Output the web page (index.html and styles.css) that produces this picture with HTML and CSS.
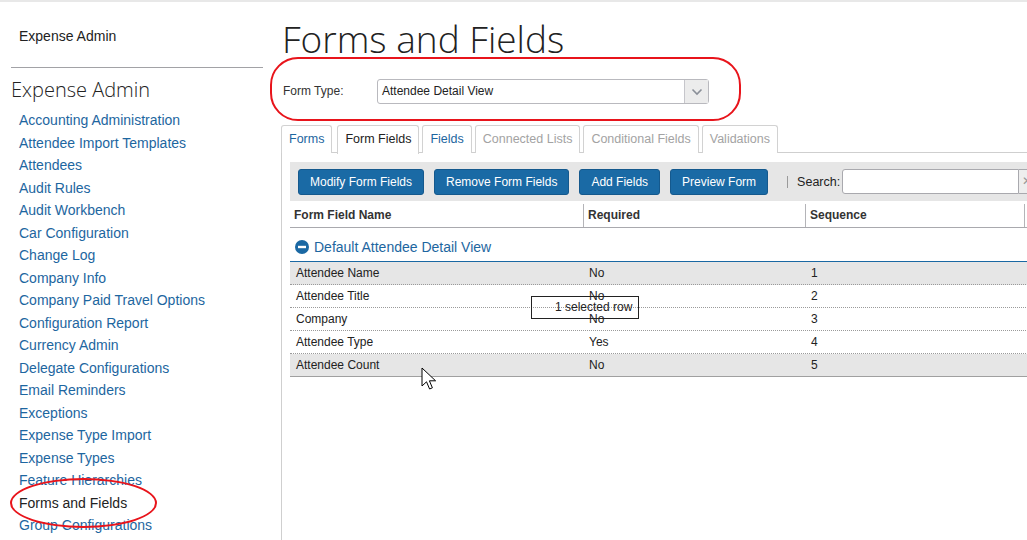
FILE: index.html
```html
<!DOCTYPE html>
<html>
<head>
<meta charset="utf-8">
<link rel="stylesheet" href="styles.css">
</head>
<body>
<div class="page">
  <aside class="sidebar">
    <div class="sb-top">Expense Admin</div>
    <h2 class="sb-head">Expense Admin</h2>
    <nav class="sb-links">
      <a>Accounting Administration</a>
      <a>Attendee Import Templates</a>
      <a>Attendees</a>
      <a>Audit Rules</a>
      <a>Audit Workbench</a>
      <a>Car Configuration</a>
      <a>Change Log</a>
      <a>Company Info</a>
      <a>Company Paid Travel Options</a>
      <a>Configuration Report</a>
      <a>Currency Admin</a>
      <a>Delegate Configurations</a>
      <a>Email Reminders</a>
      <a>Exceptions</a>
      <a>Expense Type Import</a>
      <a>Expense Types</a>
      <a>Feature Hierarchies</a>
      <a class="current">Forms and Fields</a>
      <a>Group Configurations</a>
    </nav>
    <div class="mark mark-side"></div>
  </aside>
  <main class="main">
    <h1 class="title">Forms and Fields</h1>
    <div class="form-row">
      <label class="ft-label">Form Type:</label>
      <div class="select">
        <span class="select-val">Attendee Detail View</span>
        <span class="select-btn"><svg width="12" height="8" viewBox="0 0 12 8"><path d="M1.5 1.5 L6 6 L10.5 1.5" fill="none" stroke="#8a8f98" stroke-width="1.6"/></svg></span>
      </div>
      <div class="mark mark-form"></div>
    </div>
    <div class="tabs">
      <span class="tab link">Forms</span>
      <span class="tab active">Form Fields</span>
      <span class="tab link">Fields</span>
      <span class="tab disabled">Connected Lists</span>
      <span class="tab disabled">Conditional Fields</span>
      <span class="tab disabled">Validations</span>
    </div>
    <section class="panel">
      <div class="toolbar">
        <button class="btn">Modify Form Fields</button>
        <button class="btn">Remove Form Fields</button>
        <button class="btn">Add Fields</button>
        <button class="btn">Preview Form</button>
        <span class="sep"></span>
        <span class="search-label">Search:</span>
        <span class="search-input"></span>
        <span class="search-clear">✕</span>
      </div>
      <div class="grid">
        <div class="row head">
          <div class="cell">Form Field Name</div>
          <div class="cell">Required</div>
          <div class="cell">Sequence</div>
          <div class="cell"></div>
        </div>
        <div class="group">
          <svg class="minus" width="14" height="14" viewBox="0 0 14 14"><circle cx="7" cy="7" r="7" fill="#1a68a3"/><rect x="3" y="5.8" width="8" height="2.4" fill="#fff"/></svg>
          <span>Default Attendee Detail View</span>
        </div>
        <div class="rows">
          <div class="row data shade"><div class="cell">Attendee Name</div><div class="cell">No</div><div class="cell">1</div><div class="cell"></div></div>
          <div class="row data"><div class="cell">Attendee Title</div><div class="cell">No</div><div class="cell">2</div><div class="cell"></div></div>
          <div class="row data"><div class="cell">Company</div><div class="cell">No</div><div class="cell">3</div><div class="cell"></div></div>
          <div class="row data"><div class="cell">Attendee Type</div><div class="cell">Yes</div><div class="cell">4</div><div class="cell"></div></div>
          <div class="row data shade last"><div class="cell">Attendee Count</div><div class="cell">No</div><div class="cell">5</div><div class="cell"></div></div>
          <div class="tip">1 selected row</div>
          <svg class="cursor" width="18" height="26" viewBox="0 0 18 26"><path d="M1 1 L1 19 L5.5 14.8 L8.6 22 L11.4 20.8 L8.4 13.8 L14.6 13.8 Z" fill="#fff" stroke="#000" stroke-width="1" stroke-linejoin="round"/></svg>
        </div>
      </div>
    </section>
  </main>
</div>
</body>
</html>
```

FILE: styles.css
```css
* { box-sizing: border-box; }
html, body { margin: 0; padding: 0; }
body {
  width: 1027px;
  height: 540px;
  overflow: hidden;
  background: #fff;
  font-family: "Liberation Sans", Arial, sans-serif;
  color: #222;
}
.page {
  display: flex;
  border-top: 2px solid #e8e8e8;
  height: 540px;
  width: 1027px;
  overflow: hidden;
}
.sidebar {
  position: relative;
  width: 281px;
  flex: none;
}
.sb-top {
  margin-left: 11px;
  width: 252px;
  height: 66px;
  border-bottom: 1px solid #a2a2a6;
  padding: 25px 0 0 8px;
  font-size: 14px;
  line-height: 18px;
  color: #222;
}
.sb-head {
  margin: 9px 0 0 11px;
  font-family: "Open Sans", sans-serif;
  font-weight: 300;
  font-size: 20px;
  line-height: 26px;
  color: #222;
}
.sb-links {
  display: flex;
  flex-direction: column;
  padding: 6px 0 0 19px;
}
.sb-links a {
  font-size: 14px;
  line-height: 22.5px;
  color: #1d66a0;
  white-space: nowrap;
}
.sb-links a.current { color: #222; }
.mark {
  position: absolute;
  border: 2px solid #e8141b;
  pointer-events: none;
}
.mark-side {
  left: 10px;
  top: 476px;
  width: 147px;
  height: 50px;
  border-radius: 50%;
}
.main {
  flex: none;
  width: 819px;
}
.title {
  margin: 14px 0 0 1px;
  font-family: "Open Sans", sans-serif;
  font-weight: 300;
  font-size: 37px;
  line-height: 46px;
  color: #222;
}
.form-row {
  position: relative;
  display: flex;
  align-items: center;
  margin-top: 17px;
  padding-left: 2px;
  height: 25px;
}
.ft-label {
  width: 94px;
  font-size: 12px;
  color: #333;
  margin-top: -2px;
}
.select {
  display: flex;
  width: 332px;
  height: 25px;
  border: 1px solid #b9b9be;
  border-radius: 3px;
  background: #fff;
}
.select-val {
  flex: 1;
  font-size: 12px;
  line-height: 23px;
  padding-left: 4px;
}
.select-btn {
  width: 24px;
  border-left: 1px solid #c6c6cb;
  background: #ececec;
  display: flex;
  align-items: center;
  justify-content: center;
}
.mark-form {
  left: -11px;
  top: -22px;
  width: 471px;
  height: 64px;
  border-radius: 28px;
}
.tabs {
  display: flex;
  gap: 3px;
  margin-top: 21px;
  height: 28px;
  border-bottom: 1px solid #cfcfcf;
  width: 819px;
}
.tab {
  height: 28px;
  border: 1px solid #d2d2d2;
  border-bottom: none;
  border-radius: 3px 3px 0 0;
  padding: 0 7px;
  font-size: 12.5px;
  line-height: 27px;
  background: #fff;
  white-space: nowrap;
}
.tab.link { color: #1d66a0; }
.tab.active { color: #222; height: 29px; margin-left: 2px; }
.tab.disabled { color: #a3a3a3; }
.panel {
  border-left: 1px solid #cfcfcf;
  padding: 9px 0 0 8px;
  height: 400px;
}
.toolbar {
  display: flex;
  align-items: center;
  height: 39px;
  width: 810px;
  background: #e6e6e6;
  padding-left: 8px;
}
.btn {
  flex: none;
  white-space: nowrap;
  height: 26px;
  margin-right: 10px;
  padding: 0 11px;
  border: 1px solid #15598d;
  border-radius: 3px;
  background: #1a6aa5;
  color: #fff;
  font-family: "Liberation Sans", Arial, sans-serif;
  font-size: 12px;
}
.sep {
  flex: none;
  width: 1px;
  height: 12px;
  background: #9a9a9a;
  margin: 0 9px 0 9px;
}
.search-label {
  flex: none;
  font-size: 12.5px;
  color: #222;
  margin-right: 2px;
}
.search-input {
  flex: none;
  width: 177px;
  height: 25px;
  border: 1px solid #a9a9ae;
  border-radius: 3px 0 0 3px;
  background: #fff;
}
.search-clear {
  flex: none;
  width: 24px;
  height: 25px;
  border: 1px solid #a9a9ae;
  border-left: none;
  background: #eee;
  color: #999;
  font-size: 12px;
  line-height: 23px;
  padding-left: 3px;
}
.grid { width: 810px; }
.row {
  display: grid;
  grid-template-columns: 293px 222px 219px 1fr;
}
.head {
  height: 27px;
  border-bottom: 1px solid #a9a9ae;
  padding-top: 3px;
}
.head .cell {
  font-weight: bold;
  font-size: 12px;
  color: #333;
  line-height: 23px;
  padding-left: 4px;
  border-left: 1px solid #b4b4b8;
}
.head .cell:first-child { border-left: none; }
.group {
  display: flex;
  align-items: center;
  gap: 5px;
  height: 34px;
  padding: 4px 0 0 5px;
  border-bottom: 1px solid #1a68a3;
  color: #1d66a0;
  font-size: 14px;
}
.rows { position: relative; }
.data {
  height: 23px;
  border-bottom: 1px dotted #9a9a9a;
}
.data.last { border-bottom: 1px solid #a0a0a0; }
.data.shade { background: #e6e6e6; }
.data .cell {
  font-size: 12px;
  line-height: 22px;
  padding-left: 6px;
  color: #222;
}
.tip {
  position: absolute;
  left: 241px;
  top: 34px;
  width: 108px;
  height: 23px;
  border: 1px solid #222;
  font-size: 12px;
  line-height: 21px;
  padding-left: 23px;
  color: #222;
  white-space: nowrap;
}
.cursor {
  position: absolute;
  left: 131px;
  top: 105px;
}
```
